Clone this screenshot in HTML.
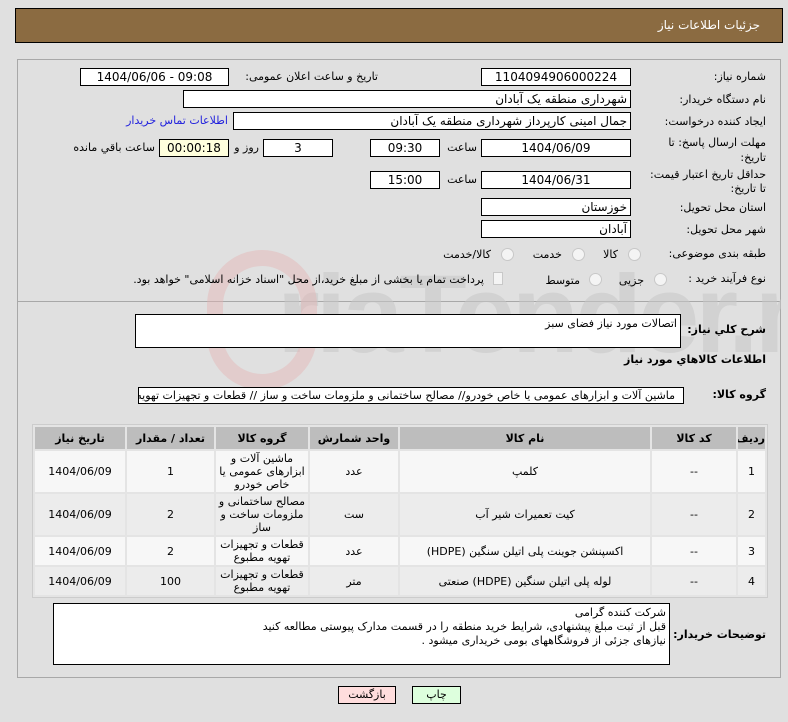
<!DOCTYPE html>
<html><head><meta charset="utf-8"><style>
*{box-sizing:border-box;margin:0;padding:0}
body{width:788px;height:722px;background:#e0e0e0;font-family:"DejaVu Sans",sans-serif;font-size:11px;color:#000;position:relative;overflow:hidden}
.a{position:absolute;white-space:nowrap}
.in{position:absolute;background:#fff;border:1px solid #000;height:18px;line-height:16px;text-align:center;font-size:12px}
.l{position:absolute;white-space:nowrap;direction:rtl;text-align:right}
.b{font-weight:bold;font-size:11px;letter-spacing:-0.3px}
.rad{position:absolute;width:13px;height:13px;border-radius:50%;border:1px solid #c8c8c8;background:#f4f4f4}
table{position:absolute;left:32px;top:424px;width:736px;border-collapse:separate;border-spacing:2px;background:#e4e4e4;border:1px solid #ccc;direction:rtl;table-layout:fixed}
td,th{text-align:center;font-size:11px;line-height:13px;overflow:hidden;padding:0}
th{background:#bdbdbd;height:22px;font-weight:bold}
tr.o td{background:#f7f7f7}
tr.e td{background:#ececec}
.wm{position:absolute;left:17px;top:230px;width:764px;height:180px;overflow:hidden}
</style></head><body>
<div class="a" style="left:15px;top:8px;width:768px;height:35px;background:#8b6b41;border:1px solid #000"></div>
<div class="l" style="right:28px;top:18px;color:#fff;font-size:12px">جزئیات اطلاعات نیاز</div>
<div class="a" style="left:17px;top:59px;width:764px;height:619px;border:1px solid #a8a8a8"></div>
<div class="a" style="left:17px;top:301px;width:764px;height:1px;background:#a8a8a8"></div>
<div class="wm">
<div class="a" style="left:260px;top:10px;font-size:110px;font-weight:bold;color:#c8c8c8;opacity:.55;letter-spacing:-4px;font-family:'Liberation Sans',sans-serif;line-height:150px">riaTender.net</div>
<div class="a" style="left:190px;top:20px;width:110px;height:140px;border:16px solid #e4b4b4;border-radius:55px;opacity:.45"></div>
</div>

<div class="l" style="right:22px;top:70px">شماره نیاز:</div>
<div class="in" style="left:481px;top:68px;width:150px">1104094906000224</div>
<div class="l" style="right:410px;top:70px">تاریخ و ساعت اعلان عمومی:</div>
<div class="in" style="left:80px;top:68px;width:149px">1404/06/06 - 09:08</div>

<div class="l" style="right:22px;top:93px">نام دستگاه خریدار:</div>
<div class="in" style="left:183px;top:90px;width:448px;text-align:right;padding-right:3px;direction:rtl">شهرداری منطقه یک آبادان</div>

<div class="l" style="right:22px;top:115px">ایجاد کننده درخواست:</div>
<div class="in" style="left:233px;top:112px;width:398px;text-align:right;padding-right:3px;direction:rtl">جمال امینی کارپرداز شهرداری منطقه یک آبادان</div>
<div class="l" style="right:560px;top:114px;color:#2222dd">اطلاعات تماس خریدار</div>

<div class="l" style="right:22px;top:136px">مهلت ارسال پاسخ: تا</div>
<div class="l" style="right:22px;top:151px">تاریخ:</div>
<div class="in" style="left:481px;top:139px;width:150px">1404/06/09</div>
<div class="l" style="right:311px;top:141px">ساعت</div>
<div class="in" style="left:370px;top:139px;width:70px">09:30</div>
<div class="in" style="left:263px;top:139px;width:70px">3</div>
<div class="l" style="right:529px;top:141px">روز و</div>
<div class="in" style="left:159px;top:139px;width:70px;background:#ffffdd">00:00:18</div>
<div class="l" style="right:633px;top:141px">ساعت باقي مانده</div>

<div class="l" style="right:22px;top:168px">حداقل تاریخ اعتبار قیمت:</div>
<div class="l" style="right:22px;top:182px">تا تاریخ:</div>
<div class="in" style="left:481px;top:171px;width:150px">1404/06/31</div>
<div class="l" style="right:311px;top:173px">ساعت</div>
<div class="in" style="left:370px;top:171px;width:70px">15:00</div>

<div class="l" style="right:22px;top:201px">استان محل تحویل:</div>
<div class="in" style="left:481px;top:198px;width:150px;text-align:right;padding-right:3px">خوزستان</div>
<div class="l" style="right:22px;top:223px">شهر محل تحویل:</div>
<div class="in" style="left:481px;top:220px;width:150px;text-align:right;padding-right:3px">آبادان</div>

<div class="l" style="right:22px;top:247px">طبقه بندی موضوعی:</div>
<div class="rad" style="left:628px;top:248px"></div><div class="l" style="right:170px;top:248px">کالا</div>
<div class="rad" style="left:572px;top:248px"></div><div class="l" style="right:226px;top:248px">خدمت</div>
<div class="rad" style="left:501px;top:248px"></div><div class="l" style="right:297px;top:248px">کالا/خدمت</div>

<div class="l" style="right:22px;top:272px">نوع فرآیند خرید :</div>
<div class="rad" style="left:654px;top:273px"></div><div class="l" style="right:144px;top:274px">جزیی</div>
<div class="rad" style="left:589px;top:273px"></div><div class="l" style="right:208px;top:274px">متوسط</div>
<div class="a" style="left:493px;top:272px;width:10px;height:13px;border:1px solid #c8c8c8;background:#f4f4f4"></div>
<div class="l" style="right:304px;top:273px">پرداخت تمام یا بخشی از مبلغ خرید،از محل "اسناد خزانه اسلامی" خواهد بود.</div>

<div class="l b" style="right:22px;top:323px">شرح كلي نياز:</div>
<div class="a" style="left:135px;top:314px;width:546px;height:34px;background:#fff;border:1px solid #000;direction:rtl;text-align:right;padding:2px 3px">اتصالات مورد نیاز فضای سبز</div>
<div class="l b" style="right:22px;top:353px">اطلاعات کالاهاي مورد نياز</div>
<div class="l b" style="right:22px;top:388px">گروه کالا:</div>
<div class="a" style="left:138px;top:387px;width:546px;height:17px;background:#fff;border:1px solid #000;direction:rtl;text-align:right;padding-right:8px;overflow:hidden;line-height:15px">ماشین آلات و ابزارهای عمومی یا خاص خودرو// مصالح ساختمانی و ملزومات ساخت و ساز //  قطعات و تجهیزات تهویه مطبوع</div>

<table>
<colgroup><col style="width:27px"><col style="width:84px"><col style="width:250px"><col style="width:88px"><col style="width:92px"><col style="width:87px"><col></colgroup>
<tr><th>ردیف</th><th>کد کالا</th><th>نام کالا</th><th>واحد شمارش</th><th>گروه کالا</th><th>تعداد / مقدار</th><th>تاریخ نیاز</th></tr>
<tr class="o" style="height:41px"><td>1</td><td>--</td><td>کلمپ</td><td>عدد</td><td>ماشین آلات و ابزارهای عمومی یا خاص خودرو</td><td>1</td><td>1404/06/09</td></tr>
<tr class="e" style="height:41px"><td>2</td><td>--</td><td>کیت تعمیرات شیر آب</td><td>ست</td><td>مصالح ساختمانی و ملزومات ساخت و ساز</td><td>2</td><td>1404/06/09</td></tr>
<tr class="o" style="height:28px"><td>3</td><td>--</td><td>اکسپنشن جوینت پلی اتیلن سنگین (HDPE)</td><td>عدد</td><td>قطعات و تجهیزات تهویه مطبوع</td><td>2</td><td>1404/06/09</td></tr>
<tr class="e" style="height:28px"><td>4</td><td>--</td><td>لوله پلی اتیلن سنگین (HDPE) صنعتی</td><td>متر</td><td>قطعات و تجهیزات تهویه مطبوع</td><td>100</td><td>1404/06/09</td></tr>
</table>

<div class="l b" style="right:22px;top:628px">توضیحات خریدار:</div>
<div class="a" style="left:53px;top:603px;width:617px;height:62px;background:#fff;border:1px solid #000;direction:rtl;text-align:right;padding:2px 3px;line-height:14px">شرکت کننده گرامی<br>قبل از ثبت مبلغ پیشنهادی، شرایط خرید منطقه را در قسمت مدارک پیوستی مطالعه کنید<br>نیازهای جزئی از فروشگاههای بومی خریداری میشود .</div>

<div class="a" style="left:338px;top:686px;width:58px;height:18px;background:#ffdddd;border:1px solid #000;text-align:center;line-height:16px">بازگشت</div>
<div class="a" style="left:412px;top:686px;width:49px;height:18px;background:#ddffdd;border:1px solid #000;text-align:center;line-height:16px">چاپ</div>
</body></html>
